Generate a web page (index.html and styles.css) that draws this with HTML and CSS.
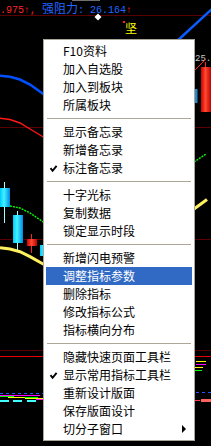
FILE: index.html
```html
<!DOCTYPE html>
<html>
<head>
<meta charset="utf-8">
<link rel="stylesheet" href="styles.css">
</head>
<body>
<div class="screen">
  <svg class="chart" width="211" height="446" viewBox="0 0 211 446" xmlns="http://www.w3.org/2000/svg">
    <defs>
      <linearGradient id="cyan" x1="0" x2="1" y1="0" y2="0">
        <stop offset="0" stop-color="#00c8ff"/>
        <stop offset="0.4" stop-color="#40f4ff"/>
        <stop offset="1" stop-color="#0088e8"/>
      </linearGradient>
      <linearGradient id="red" x1="0" x2="1" y1="0" y2="0">
        <stop offset="0" stop-color="#d00000"/>
        <stop offset="0.45" stop-color="#ff4a30"/>
        <stop offset="1" stop-color="#c00000"/>
      </linearGradient>
    </defs>
    <!-- grid lines -->
    <g stroke="#5a0000" stroke-width="1">
      <line x1="0" y1="15.5" x2="211" y2="15.5"/>
      <line x1="0" y1="127.5" x2="211" y2="127.5"/>
      <line x1="0" y1="239.5" x2="211" y2="239.5"/>
      <line x1="0" y1="350.5" x2="211" y2="350.5"/>
    </g>
    <line x1="0" y1="356.5" x2="211" y2="356.5" stroke="#e80000" stroke-width="1"/>
    <line x1="72" y1="0.5" x2="100" y2="0.5" stroke="#707070" stroke-width="1"/>
    <!-- cursor marks -->
    <polygon points="98,13.5 101.5,17 98,20.5 94.5,17" fill="#ffffff"/>
    <rect x="123" y="21" width="2" height="2" fill="#ff2020"/>
    <text x="125" y="33" class="tag">坚</text>
    <!-- top right blue line -->
    <line x1="176" y1="42" x2="212" y2="9" stroke="#0a5cff" stroke-width="2.5"/>
    <!-- curves left -->
    <polyline points="0,75.7 10,76.7 20,79.5 30,84.5 37,89.5 44,94.5" fill="none" stroke="#0050ff" stroke-width="2.6"/>
    <polyline points="0,118.3 10,119.5 20,123 30,129 40,135 44,137.5" fill="none" stroke="#ff1818" stroke-width="1.4"/>
    <polyline points="10,206 20,208 30,213 44,222.5" fill="none" stroke="#00ff00" stroke-width="1.4" stroke-dasharray="2 1"/>
    <polyline points="0,247.7 10,249 20,251.7 30,256.7 44,264.5" fill="none" stroke="#fff060" stroke-width="3"/>
    <!-- candles left -->
    <line x1="4.5" y1="182" x2="4.5" y2="223" stroke="#a0ffff" stroke-width="1"/>
    <rect x="0" y="188" width="10" height="19" fill="url(#cyan)"/>
    <line x1="17.5" y1="211" x2="17.5" y2="250" stroke="#a0ffff" stroke-width="1"/>
    <rect x="13" y="215" width="10" height="28" fill="url(#cyan)"/>
    <line x1="31.5" y1="234" x2="31.5" y2="253" stroke="#ff2020" stroke-width="1"/>
    <rect x="27" y="239" width="10" height="7" fill="url(#red)"/>
    <rect x="40" y="245" width="10" height="11" fill="url(#cyan)"/>
    <!-- bottom indicators left -->
    <line x1="0" y1="393.5" x2="44" y2="393.5" stroke="#2850ff" stroke-width="1" stroke-dasharray="3 3"/>
    <line x1="0" y1="395.5" x2="40" y2="395.5" stroke="#ff00ff" stroke-width="1"/>
    <line x1="0" y1="396.5" x2="14" y2="396.5" stroke="#00ff00" stroke-width="1"/>
    <line x1="8" y1="397.5" x2="25" y2="397.5" stroke="#ffff00" stroke-width="1"/>
    <line x1="25" y1="397.5" x2="38" y2="397.5" stroke="#00ff00" stroke-width="1"/>
    <line x1="25" y1="398.5" x2="44" y2="398.5" stroke="#ffff00" stroke-width="1"/>
    <line x1="36" y1="399.5" x2="44" y2="399.5" stroke="#ff00ff" stroke-width="1"/>
    <rect x="0" y="400" width="9" height="2" fill="#40ffff"/>
    <rect x="13" y="400" width="9" height="2" fill="#40ffff"/>
    <rect x="27" y="400" width="9" height="2" fill="#40ffff"/>
    <!-- right side -->
    <text x="195" y="61" class="price">25.</text>
    <line x1="195" y1="70" x2="206" y2="59" stroke="#ff2020" stroke-width="1"/>
    <line x1="205.5" y1="62" x2="205.5" y2="67" stroke="#ff2020" stroke-width="1"/>
    <rect x="201" y="67" width="10" height="45" fill="url(#red)"/>
    <rect x="195" y="89" width="2.5" height="14" fill="#2a8ad0"/>
    <line x1="194" y1="162" x2="206" y2="154" stroke="#00ff00" stroke-width="1.4" stroke-dasharray="2 1"/>
    <line x1="194" y1="209" x2="207" y2="199.5" stroke="#fff060" stroke-width="3"/>
    <line x1="196" y1="361.5" x2="206" y2="361.5" stroke="#ffff00" stroke-width="1"/>
    <line x1="196" y1="364.5" x2="206" y2="364.5" stroke="#ff00ff" stroke-width="1"/>
    <line x1="195" y1="367.5" x2="203" y2="367.5" stroke="#ffff00" stroke-width="1"/>
    <line x1="195" y1="370.5" x2="202" y2="370.5" stroke="#00ff00" stroke-width="1"/>
    <line x1="196" y1="392.5" x2="211" y2="392.5" stroke="#2850ff" stroke-width="1" stroke-dasharray="3 3"/>
    <line x1="195" y1="400.5" x2="200" y2="400.5" stroke="#ff4040" stroke-width="1"/>
    <rect x="201" y="399" width="10" height="3" fill="#ff6060"/>
  </svg>

  <div class="quote"><span class="up">.975↑,</span> <span class="lbl"><span class="cjk">强阻力</span>: 26.164</span><span class="up">↑</span></div>

  <ul class="menu">
    <li class="item"><span class="mark"></span><span class="label">F10资料</span></li>
    <li class="item"><span class="mark"></span><span class="label">加入自选股</span></li>
    <li class="item"><span class="mark"></span><span class="label">加入到板块</span></li>
    <li class="item"><span class="mark"></span><span class="label">所属板块</span></li>
    <li class="sep"></li>
    <li class="item"><span class="mark"></span><span class="label">显示备忘录</span></li>
    <li class="item"><span class="mark"></span><span class="label">新增备忘录</span></li>
    <li class="item"><span class="mark"><svg width="17" height="18" viewBox="0 0 17 18"><polyline points="4.5,9.2 6.6,11.8 10.6,6.8" fill="none" stroke="#000" stroke-width="1.9"/></svg></span><span class="label">标注备忘录</span></li>
    <li class="sep"></li>
    <li class="item"><span class="mark"></span><span class="label">十字光标</span></li>
    <li class="item"><span class="mark"></span><span class="label">复制数据</span></li>
    <li class="item"><span class="mark"></span><span class="label">锁定显示时段</span></li>
    <li class="sep"></li>
    <li class="item"><span class="mark"></span><span class="label">新增闪电预警</span></li>
    <li class="item active"><span class="mark"></span><span class="label">调整指标参数</span></li>
    <li class="item"><span class="mark"></span><span class="label">删除指标</span></li>
    <li class="item"><span class="mark"></span><span class="label">修改指标公式</span></li>
    <li class="item"><span class="mark"></span><span class="label">指标横向分布</span></li>
    <li class="sep"></li>
    <li class="item"><span class="mark"></span><span class="label">隐藏快速页面工具栏</span></li>
    <li class="item"><span class="mark"><svg width="17" height="18" viewBox="0 0 17 18"><polyline points="4.5,9.2 6.6,11.8 10.6,6.8" fill="none" stroke="#000" stroke-width="1.9"/></svg></span><span class="label">显示常用指标工具栏</span></li>
    <li class="item"><span class="mark"></span><span class="label">重新设计版面</span></li>
    <li class="item"><span class="mark"></span><span class="label">保存版面设计</span></li>
    <li class="item"><span class="mark"></span><span class="label">切分子窗口</span><span class="arrow"></span></li>
  </ul>
</div>
</body>
</html>
```

FILE: styles.css
```css
html, body {
  margin: 0;
  padding: 0;
  background: #000;
}

body {
  width: 211px;
  height: 446px;
  overflow: hidden;
}

.screen {
  position: relative;
  width: 211px;
  height: 446px;
  overflow: hidden;
  background: #000;
}

.chart {
  position: absolute;
  left: 0;
  top: 0;
  display: block;
}

.chart .tag {
  font-family: "Noto Sans CJK SC", sans-serif;
  font-size: 12px;
  fill: #ffff00;
}

.chart .price {
  font-family: "Liberation Mono", "DejaVu Sans Mono", monospace;
  font-size: 9px;
  fill: #c8c8c8;
}

.quote {
  position: relative;
  padding-top: 1px;
  height: 14px;
  line-height: 14px;
  white-space: nowrap;
  font-family: "Liberation Mono", "DejaVu Sans Mono", monospace;
  font-size: 10px;
  color: #2266ff;
}

.quote .up {
  color: #ff2020;
}

.quote .lbl {
  color: #2266ff;
}

.quote .cjk {
  font-family: "Noto Sans CJK SC", sans-serif;
  font-size: 12px;
}

.menu {
  position: absolute;
  left: 43px;
  top: 39px;
  width: 146px;
  margin: 0;
  padding: 2px;
  list-style: none;
  background: #fff;
  border: 1px solid #a8a698;
  font-family: "Noto Sans CJK SC", sans-serif;
  font-size: 12px;
  color: #000;
}

.item {
  display: flex;
  align-items: center;
  height: 18px;
  line-height: 18px;
  white-space: nowrap;
}

.item.active {
  background: #316ac5;
  color: #fff;
}

.mark {
  width: 17px;
  height: 18px;
  flex: none;
  display: flex;
}

.mark svg {
  display: block;
}

.label {
  flex: none;
}

.arrow {
  margin-left: auto;
  margin-right: 6px;
  width: 0;
  height: 0;
  border-left: 4px solid #000;
  border-top: 4px solid transparent;
  border-bottom: 4px solid transparent;
}

.sep {
  height: 9px;
  display: flex;
  flex-direction: column;
  justify-content: center;
  padding: 0 1px;
}

.sep::before {
  content: "";
  display: block;
  height: 1px;
  background: #aca899;
}
```
